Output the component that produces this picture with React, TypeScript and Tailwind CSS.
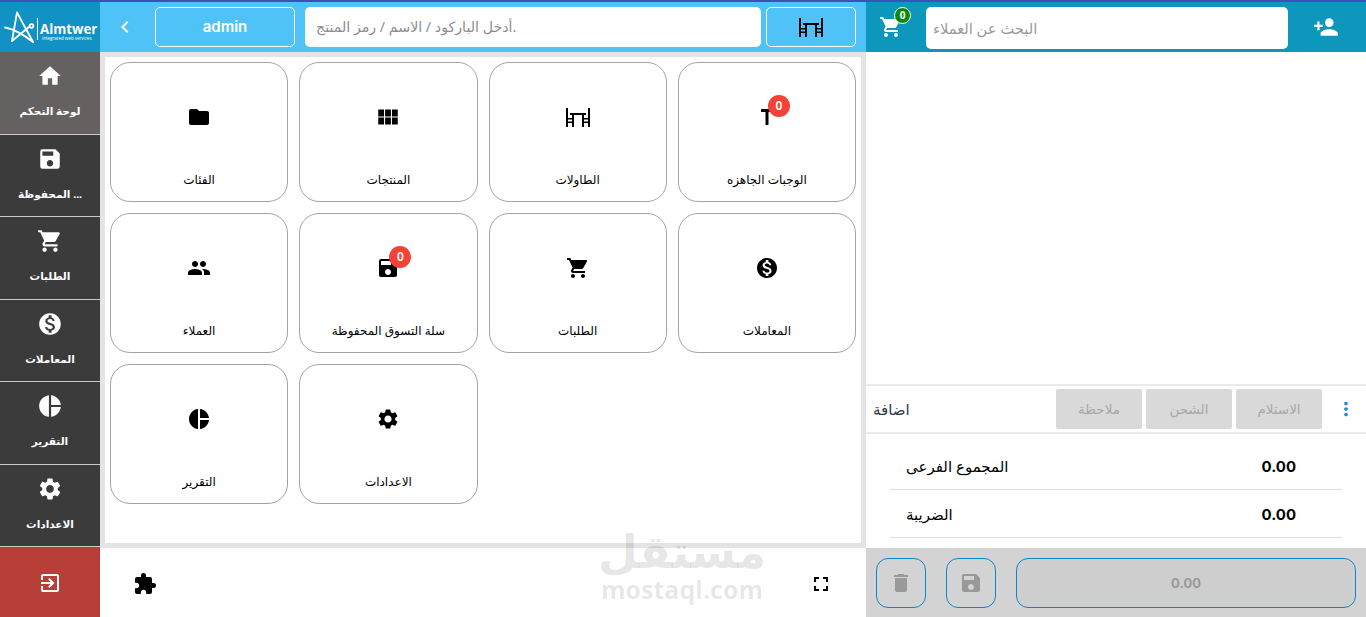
import { MdHome, MdSave, MdShoppingCart, MdMonetizationOn, MdPieChart, MdSettings, MdExitToApp, MdFolder, MdViewModule, MdGroup, MdExtension, MdFullscreen, MdPersonAdd, MdDelete, MdMoreVert, MdChevronLeft } from 'react-icons/md';
import type { ReactNode } from 'react';

const font = "font-['Noto_Sans','DejaVu_Sans',sans-serif]";

function TableIcon({ className }: { className?: string }) {
  return (
    <svg viewBox="0 0 24 19" className={className} fill="currentColor">
      <path d="M0 0h2v19H0zM22 0h2v19h-2z" />
      <path d="M4 5h16v2H4zM6 7h2v12H6zM16 7h2v12h-2z" />
      <path d="M2 10h4v1.5H2zM18 10h4v1.5h-4zM2 13.5h4V15H2zM18 13.5h4V15h-4z" />
    </svg>
  );
}

// only the left part shows next to the badge
function MealIcon() {
  return (
    <svg viewBox="0 0 12 16" className="w-[12px] h-[16px]" fill="currentColor">
      <path d="M0 0h12v3H0zM4.500 3h3v13h-3z" />
    </svg>
  );
}

const sideItems = [
  { label: 'لوحة التحكم', icon: <MdHome size={26} />, active: true },
  { label: '... المحفوظة', icon: <MdSave size={26} /> },
  { label: 'الطلبات', icon: <MdShoppingCart size={26} /> },
  { label: 'المعاملات', icon: <MdMonetizationOn size={26} /> },
  { label: 'التقرير', icon: <MdPieChart size={26} /> },
  { label: 'الاعدادات', icon: <MdSettings size={26} /> },
];

type Card = { label: string; icon: ReactNode; badge?: boolean };

const cards: Card[] = [
  { label: 'الفئات', icon: <MdFolder size={24} /> },
  { label: 'المنتجات', icon: <MdViewModule size={26} /> },
  { label: 'الطاولات', icon: <TableIcon className="w-[24px] h-[19px]" /> },
  { label: 'الوجبات الجاهزه', icon: <MealIcon />, badge: true },
  { label: 'العملاء', icon: <MdGroup size={24} /> },
  { label: 'سلة التسوق المحفوظة', icon: <MdSave size={24} />, badge: true },
  { label: 'الطلبات', icon: <MdShoppingCart size={24} /> },
  { label: 'المعاملات', icon: <MdMonetizationOn size={24} /> },
  { label: 'التقرير', icon: <MdPieChart size={24} /> },
  { label: 'الاعدادات', icon: <MdSettings size={24} /> },
];

export default function App() {
  return (
    <div className={`relative h-[617px] w-[1366px] overflow-hidden bg-white flex flex-col ${font}`}>
      <div className="h-[2px] bg-[#3f51b5] shrink-0" />
      <div className="flex flex-1 min-h-0">
        {/* sidebar */}
        <aside className="w-[100px] shrink-0 flex flex-col bg-[#3b3b3b] text-white">
          <div className="h-[50px] bg-[#1291c4] flex items-center">
            <svg viewBox="0 0 36 50" className="w-[36px] h-[50px] shrink-0" fill="none" stroke="white" strokeWidth="1.800" strokeLinecap="round" strokeLinejoin="round">
              <path d="M12 39L17 10.500L33 40" />
              <path d="M5 25.500C14 27 24 33 33 40" />
              <path d="M12 39L29.500 24.500" />
              <circle cx="31.500" cy="24" r="1.800" />
            </svg>
            <div className="ml-[1px] mt-[4px] border-l border-white pl-[2px] h-[22px] flex flex-col justify-end">
              <div className="text-[13.300px] font-bold leading-[13px] font-['Open_Sans',sans-serif]">Almtwer</div>
              <div className="text-[4.500px] leading-[4px] pl-[2px] font-['Open_Sans',sans-serif]">integrated web services</div>
            </div>
          </div>
          {sideItems.map((item) => (
            <div
              key={item.label}
              className={`h-[82.500px] shrink-0 flex flex-col items-center pt-[11px] border-b border-[#c9c9c9] ${item.active ? 'bg-[#656161]' : ''}`}
            >
              {item.icon}
              <span dir="rtl" className="mt-[13px] text-[10.500px] font-bold leading-[18px]">{item.label}</span>
            </div>
          ))}
          <div className="flex-1 bg-[#b83f38] flex items-center justify-center pt-[2px]">
            <MdExitToApp size={24} />
          </div>
        </aside>

        {/* center */}
        <main className="w-[766px] shrink-0 flex flex-col">
          <header className="h-[50px] shrink-0 bg-[#4fc3f7] flex items-center text-white">
            <MdChevronLeft size={24} className="ml-[13px]" />
            <div className="ml-[18px] w-[140px] h-[40px] rounded-[5px] border border-white flex items-center justify-center text-[15px] font-semibold font-['Inter',sans-serif]">
              admin
            </div>
            <div className="ml-[10px] w-[456px] h-[40px] rounded-[5px] bg-white flex items-center px-[11px] text-[14.200px] text-[#8d8d8d]">
              أدخل الباركود / الاسم / رمز المنتج.
            </div>
            <div className="ml-[5px] w-[90px] h-[40px] rounded-[5px] border border-white flex items-center justify-center text-black">
              <TableIcon className="w-[24px] h-[19px]" />
            </div>
          </header>
          <div className="h-[496px] shrink-0 border-[5px] border-[#e4e4e4] p-[5px]">
            <div className="grid grid-cols-4 gap-[11px] auto-rows-[140px]">
              {cards.map((card) => (
                <div key={card.label} className="rounded-[20px] border border-[#a3a3a3] flex flex-col items-center text-black">
                  <div className="relative mt-[42px] h-[24px] flex items-center justify-center">
                    {card.icon}
                    {card.badge && (
                      <span className="absolute left-1/2 ml-[1px] top-[-10px] w-[22px] h-[22px] rounded-full bg-[#f44336] text-white text-[12px] font-semibold flex items-center justify-center">
                        0
                      </span>
                    )}
                  </div>
                  <span dir="rtl" className="mt-[42px] text-[12px] leading-[18px]">{card.label}</span>
                </div>
              ))}
            </div>
          </div>
          <footer className="flex-1 flex items-center justify-between px-[33px] pt-[2px] text-black">
            <MdExtension size={24} />
            <MdFullscreen size={24} />
          </footer>
        </main>

        {/* cart panel */}
        <section className="flex-1 flex flex-col min-w-0">
          <header className="h-[50px] shrink-0 bg-[#0d97bd] flex items-center text-white">
            <div className="relative ml-[13px] w-[24px] h-[24px]">
              <MdShoppingCart size={24} />
              <span className="absolute left-[15px] top-[-8px] w-[17px] h-[17px] rounded-full bg-[#0a8a0a] border border-white text-[10px] font-bold flex items-center justify-center">0</span>
            </div>
            <div className="ml-[23px] mt-[2px] w-[362px] h-[42px] rounded-[5px] bg-white flex items-center px-[7px] text-[14.700px] text-[#9a9a9a]">
              البحث عن العملاء
            </div>
            <MdPersonAdd size={26} className="ml-[25px]" />
          </header>
          <div className="flex-1" />
          <div className="h-[50px] shrink-0 border-y-2 border-[#e8ecef] flex items-center pl-[7px] pr-[9px]">
            <span className="text-[15px] text-[#2b3a45] font-medium">اضافة</span>
            <div className="ml-auto flex gap-[4px]">
              {['ملاحظة', 'الشحن', 'الاستلام'].map((t) => (
                <div key={t} className="w-[86px] h-[40px] rounded-[2px] bg-[#d9d9d9] text-[#a8a8a8] text-[13.500px] flex items-center justify-center">{t}</div>
              ))}
            </div>
            <MdMoreVert size={22} className="ml-[13px] text-[#1a86d8]" />
          </div>
          <div className="h-[114px] shrink-0 px-[24px] pt-[8px] text-black">
            <div className="h-[48px] border-b border-[#dedede] flex items-center justify-between pl-[16px] pr-[46px]">
              <span className="text-[15px] font-medium pt-[2px]">المجموع الفرعى</span>
              <span className="text-[15px] font-bold pt-[3px] font-['Inter',sans-serif]">0.00</span>
            </div>
            <div className="h-[48px] border-b border-[#dedede] flex items-center justify-between pl-[16px] pr-[46px]">
              <span className="text-[15px] font-medium pt-[2px]">الضريبة</span>
              <span className="text-[15px] font-bold pt-[3px] font-['Inter',sans-serif]">0.00</span>
            </div>
          </div>
          <footer className="h-[69px] shrink-0 bg-[#d3d3d3] flex items-center px-[10px] text-[#999999]">
            <div className="w-[50px] h-[50px] rounded-[12px] border border-[#0d86c6] flex items-center justify-center"><MdDelete size={24} /></div>
            <div className="ml-[20px] w-[50px] h-[50px] rounded-[12px] border border-[#0d86c6] flex items-center justify-center"><MdSave size={24} /></div>
            <div className="ml-[20px] flex-1 h-[50px] rounded-[12px] border border-[#0d86c6] bg-[#cecece] flex items-center justify-center pt-[2px] text-[13px] font-bold font-['Inter',sans-serif]">0.00</div>
          </footer>
        </section>
      </div>

      {/* watermark */}
      <div className="absolute left-[601px] top-[525px] w-[162px] flex flex-col items-center text-black/10 pointer-events-none font-bold">
        <span dir="rtl" className="text-[46px] leading-[50px]">مستقل</span>
        <span className="text-[25px] leading-[28px] font-['Open_Sans',sans-serif]">mostaql.com</span>
      </div>
    </div>
  );
}
